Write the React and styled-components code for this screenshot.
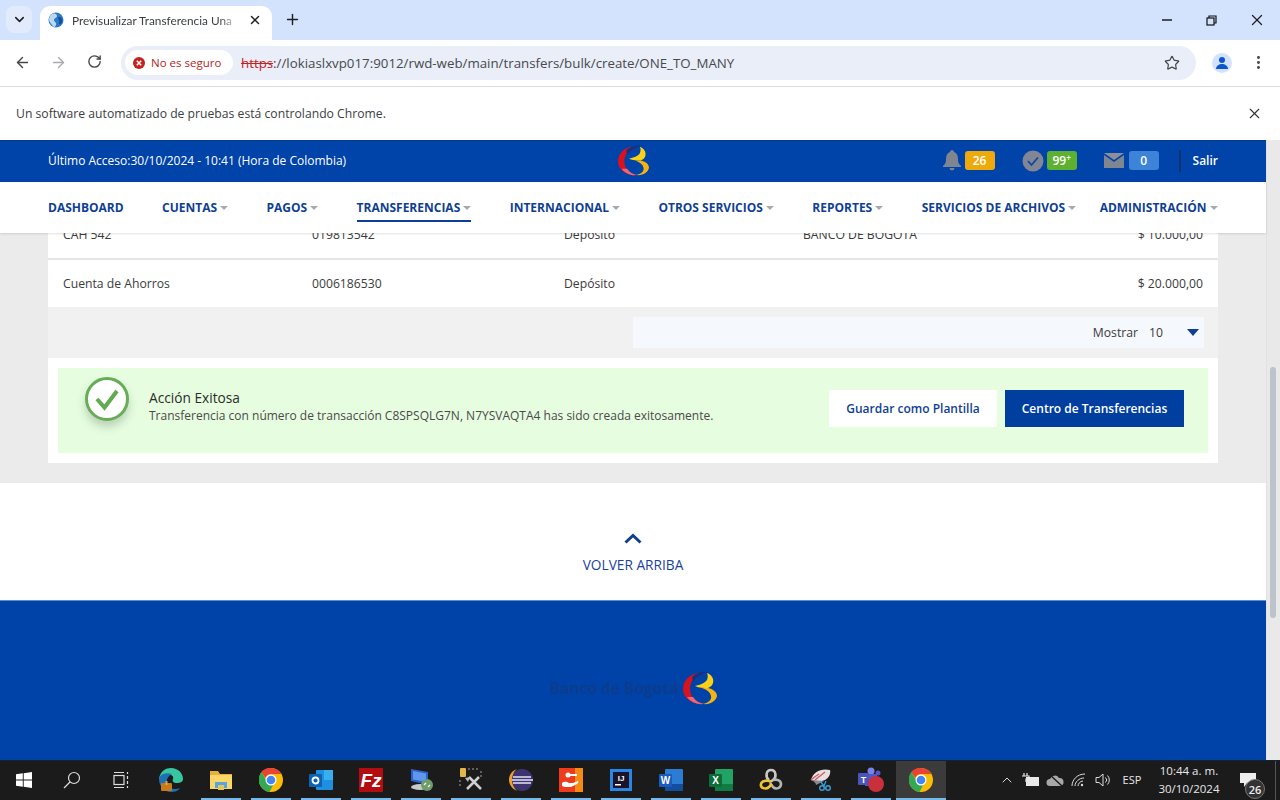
import React from 'react'
import styled, { createGlobalStyle } from 'styled-components'
import { ArrowLeft, ArrowRight, RotateCw, Star, X, Plus, ChevronDown, ChevronUp, EllipsisVertical } from 'lucide-react'

const Global = createGlobalStyle`
  html, body { margin: 0; padding: 0; height: 100%; overflow: hidden; background: #fff; }
  body { font-family: "Open Sans", "Noto Sans", sans-serif; }
  * { box-sizing: border-box; }
`

const Screen = styled.div`
  width: 1280px;
  height: 800px;
  display: flex;
  flex-direction: column;
  overflow: hidden;
`

/* browser chrome */
const TabStrip = styled.div`
  height: 40px;
  background: #d3e3fd;
  display: flex;
  align-items: flex-end;
  color: #1f1f1f;
`
const TabMenu = styled.div`
  width: 26px;
  height: 27px;
  margin: 0 8px 7px 6px;
  border-radius: 8px;
  background: #e1ebfc;
  display: flex;
  align-items: center;
  justify-content: center;
`
const Tab = styled.div`
  width: 232px;
  height: 34px;
  background: #fff;
  border-radius: 10px 10px 0 0;
  display: flex;
  align-items: center;
  padding: 0 9px 6px 8px;
  gap: 8px;
`
const TabTitle = styled.span`
  font-family: Lato, "Open Sans", sans-serif;
  font-size: 11.800px;
  width: 168px;
  white-space: nowrap;
  color: #3c4043;
  mask-image: linear-gradient(to right, #000 88%, rgba(0, 0, 0, 0.35) 96%);
`
const NewTab = styled.div`
  margin: 0 0 11px 10px;
  width: 20px;
  height: 20px;
  display: flex;
  align-items: center;
  justify-content: center;
`
const WindowButtons = styled.div`
  margin-left: auto;
  display: flex;
  align-self: stretch;
  align-items: center;
`
const WindowButton = styled.div`
  width: 46px;
  height: 40px;
  display: flex;
  align-items: center;
  justify-content: center;
`
const Toolbar = styled.div`
  height: 47px;
  background: #fff;
  border-bottom: 1px solid #dcdcdc;
  border-radius: 0 8px 0 0;
  display: flex;
  align-items: center;
  padding: 0 0 1px 0;
`
const ToolButton = styled.div`
  width: 36px;
  display: flex;
  justify-content: center;
  color: ${p => p.$off ? '#a9acb0' : '#444746'};
`
const NavButtons = styled.div`
  width: 121px;
  display: flex;
  padding-left: 4px;
`
const AddressBar = styled.div`
  width: 1075px;
  height: 34px;
  border-radius: 17px;
  background: #e9eef8;
  display: flex;
  align-items: center;
  padding: 0 4px;
`
const SecurityChip = styled.div`
  width: 108px;
  height: 25px;
  border-radius: 13px;
  background: #fff;
  display: flex;
  align-items: center;
  gap: 6px;
  padding-left: 8px;
  font-size: 11.500px;
  color: #b3261e;
  white-space: nowrap;
`
const Url = styled.div`
  margin-left: 8px;
  font-size: 13.300px;
  color: #474a4d;
  white-space: nowrap;
  s { color: #c5221f; }
`
const StarSlot = styled.div`
  margin-left: auto;
  width: 40px;
  display: flex;
  justify-content: center;
  color: #444746;
`
const Avatar = styled.div`
  width: 20px;
  height: 20px;
  margin-left: 16px;
  border-radius: 50%;
  background: #d3e3fd;
  display: flex;
  align-items: center;
  justify-content: center;
`
const MenuDots = styled.div`
  margin-left: 16px;
  width: 20px;
  display: flex;
  justify-content: center;
`
const InfoBar = styled.div`
  height: 53px;
  background: #fff;
  display: flex;
  align-items: center;
  justify-content: space-between;
  padding: 0 17px 0 16px;
  font-size: 12.200px;
  color: #3c4043;
`

/* page */
const Viewport = styled.div`
  flex: 1;
  display: flex;
  min-height: 0;
`
const Page = styled.div`
  width: 1266px;
  display: flex;
  flex-direction: column;
`
const Scrollbar = styled.div`
  width: 14px;
  background: #e9e9e9;
  border-left: 1px solid #e2e2e2;
`
const Thumb = styled.div`
  width: 6px;
  height: 251px;
  margin: 227px 0 0 3px;
  border-radius: 3px;
  background: #bcc3cb;
`
const TopBar = styled.header`
  height: 42px;
  flex: none;
  background: #0043a9;
  border-top: 1px solid #0a3a8a;
  padding: 0 48px 2px;
  display: flex;
  align-items: center;
  color: #fff;
  font-size: 12px;
`
const LastAccess = styled.div`
  width: 570px;
  white-space: nowrap;
`
const Notices = styled.div`
  margin-left: auto;
  display: flex;
  align-items: center;
`
const Notice = styled.div`
  display: flex;
  align-items: center;
  gap: ${p => p.$gap}px;
  margin-right: ${p => p.$after}px;
`
const Badge = styled.span`
  width: 30px;
  height: 19px;
  border-radius: 3px;
  background: ${p => p.$color};
  color: #fff;
  font-size: 12px;
  font-weight: 600;
  display: flex;
  align-items: center;
  justify-content: center;
  sup { font-size: 8px; line-height: 0; margin-top: -5px; }
`
const Salir = styled.span`
  border-left: 2px solid #0a3070;
  height: 22px;
  padding-left: 12px;
  font-size: 12px;
  font-weight: 600;
  display: flex;
  align-items: center;
`
const MainNav = styled.nav`
  height: 51px;
  flex: none;
  background: #fff;
  display: flex;
  align-items: center;
  gap: 38.400px;
  padding: 0 0 0 48px;
  position: relative;
  z-index: 2;
  box-shadow: 0 1px 2px rgba(0, 0, 0, 0.12);
`
const NavItem = styled.div`
  height: 51px;
  display: flex;
  align-items: center;
  gap: 3px;
  font-size: 12px;
  font-weight: 700;
  color: #0f3f93;
  white-space: nowrap;
  padding-bottom: 1px;
  margin-left: ${p => p.$tight ? '-15px' : 0};
  position: relative;
  &::after {
    content: '';
    display: ${p => p.$active ? 'block' : 'none'};
    position: absolute;
    left: 0;
    right: 0;
    bottom: 11px;
    height: 2px;
    background: #0c3f95;
  }
`
const Caret = styled.span`
  width: 0;
  height: 0;
  margin-top: 2px;
  border-left: 4px solid transparent;
  border-right: 4px solid transparent;
  border-top: 4px solid #a4a9b2;
`
const Scroller = styled.div`
  height: 250px;
  flex: none;
  background: #ebebeb;
  overflow: hidden;
  padding: 0 48px;
`
const Card = styled.section`
  margin-top: -23px;
  background: #fff;
`
const Row = styled.div`
  height: ${p => p.$last ? 47 : 50}px;
  display: grid;
  grid-template-columns: 249px 252px 239px 1fr auto;
  align-items: center;
  padding: 0 15px;
  font-size: 12.200px;
  color: #3b3b3b;
  border-bottom: ${p => p.$last ? 'none' : '2px solid #e6e6e6'};
`
const PagerBand = styled.div`
  height: 51px;
  background: #f1f1f1;
  padding: 10px 14px 0 0;
  display: flex;
  justify-content: flex-end;
`
const Pager = styled.div`
  width: 571px;
  height: 31px;
  background: #f5f8fd;
  display: flex;
  align-items: center;
  justify-content: flex-end;
  font-size: 12.200px;
  color: #3b3b3b;
  padding-right: 5px;
`
const PagerValue = styled.span`
  margin: 0 29px 0 11px;
  width: 9px;
  white-space: nowrap;
`
const PagerCaret = styled.span`
  width: 0;
  height: 0;
  border-left: 6px solid transparent;
  border-right: 6px solid transparent;
  border-top: 7px solid #0f3f93;
`
const ResultPanel = styled.div`
  padding: 10px;
`
const Success = styled.div`
  height: 85px;
  background: #e6fde0;
  display: flex;
  align-items: center;
  padding: 0 24px 4px 27px;
`
const SuccessMark = styled.div`
  width: 44px;
  height: 44px;
  border-radius: 50%;
  background: #fff;
  border: 3px solid #67ac57;
  flex: none;
  margin-top: -20px;
  display: flex;
  align-items: center;
  justify-content: center;
  box-shadow: 0 6px 9px rgba(80, 100, 80, 0.28);
`
const SuccessText = styled.div`
  margin: 0 auto 0 20px;
  padding-bottom: 4px;
`
const SuccessTitle = styled.div`
  font-size: 13.700px;
  line-height: 18px;
  color: #2b2b2b;
`
const SuccessBody = styled.div`
  font-size: 12px;
  line-height: 17px;
  color: #4a4a4a;
  white-space: nowrap;
`
const ActionButton = styled.button`
  height: 37px;
  width: ${p => p.$w}px;
  margin-left: ${p => p.$gap || 0}px;
  border: 0;
  padding: 0;
  font: 600 12px "Open Sans", sans-serif;
  background: ${p => p.$primary ? '#003f9f' : '#fff'};
  color: ${p => p.$primary ? '#fff' : '#0f3f93'};
`
const BackToTop = styled.div`
  height: 118px;
  flex: none;
  background: #fff;
  border-bottom: 1px solid #5d8ad0;
  display: flex;
  flex-direction: column;
  align-items: center;
  gap: 12px;
  padding-top: 50px;
  color: #1a43a0;
  font-size: 13.700px;
  line-height: 18px;
`
const Footer = styled.footer`
  flex: 1;
  background: #0043a8;
  display: flex;
  align-items: center;
  justify-content: center;
  gap: 4px;
  padding-top: 15px;
`
const FooterBrand = styled.span`
  font-size: 15.500px;
  font-weight: 700;
  color: #0c3c8e;
  white-space: nowrap;
`

/* taskbar */
const Taskbar = styled.div`
  height: 40px;
  flex: none;
  background: #1b1b1b;
  border-top: 1px solid #16203a;
  display: flex;
  align-items: stretch;
  color: #e8e8e8;
`
const TaskCell = styled.div`
  width: ${p => p.$w || 50}px;
  margin-left: ${p => p.$ml || 0}px;
  padding-bottom: 2px;
  display: flex;
  align-items: center;
  justify-content: center;
  background: ${p => p.$active ? '#3b3b3b' : 'transparent'};
  position: relative;
  &::after {
    content: '';
    display: ${p => p.$open ? 'block' : 'none'};
    position: absolute;
    left: ${p => p.$active ? 0 : 5}px;
    right: ${p => p.$active ? 0 : 5}px;
    bottom: 0;
    height: 2px;
    background: #76b9ed;
  }
`
const Clock = styled.div`
  width: 78px;
  text-align: center;
  font-size: 11.500px;
  line-height: 18px;
  padding-top: 1px;
  white-space: nowrap;
`
const LangLabel = styled.span`
  font-size: 11px;
`
const NotifyCount = styled.span`
  position: absolute;
  right: 3px;
  bottom: 1px;
  width: 20px;
  height: 20px;
  border-radius: 50%;
  background: #333;
  border: 1px solid #777;
  color: #eee;
  font-size: 11px;
  font-weight: 600;
  display: flex;
  align-items: center;
  justify-content: center;
`
const DesktopEdge = styled.div`
  flex: 1;
  margin-left: 7px;
  border-left: 1px solid #555;
`

const BrandLogo = ({ size }) => (
  <svg width={size} height={size} viewBox="0 0 34 34">
    <path d="M16 2C6 3 0 10 0 18c0 9 9 16 21 15-8-2-14-7-14-15 0-6 3-11 9-16z" fill="#d8121f" />
    <path d="M4 26c3 4 9 8 17 7-5-1-8-3-11-7z" fill="#e66a7a" />
    <path d="M9 6c4-4 10-6 17-5-6 1-12 4-16 10z" fill="#1d2f7a" />
    <path d="M24 2c5 2 7 6 6 10-1 3-3 4-5 5-4 0-9 0-13-2 5-1 10-3 12-6 1-2 1-5 0-7z" fill="#fcd116" />
    <path d="M25 17c5 1 9 4 9 8-1 5-7 9-14 8 5-1 9-4 8-8-1-4-4-6-9-8z" fill="#f4b412" />
  </svg>
)

const Globe = () => (
  <svg width="16" height="16" viewBox="0 0 16 16">
    <circle cx="8" cy="8" r="7.500" fill="#2b79c9" />
    <path d="M4 2c3-1 5 0 5 2S6 6 6 8s3 2 2 5-3 2-4 0-3-3-3-5 1-5 3-6z" fill="#bcd9ef" />
    <path d="M11 5c2 0 4 2 3 5s-3 3-3 1 1-2 0-3-1-3 0-3z" fill="#134f96" />
  </svg>
)

const Bell = () => (
  <svg width="18" height="21" viewBox="0 0 18 21" fill="#7f8690">
    <path d="M9 0c1 0 2 1 2 2 3 1 4 4 4 7 0 4 1 5 3 7v1H0v-1c2-2 3-3 3-7 0-3 1-6 4-7 0-1 1-2 2-2z" />
    <path d="M6.500 18h5a2.500 2.500 0 0 1-5 0z" />
  </svg>
)
const CheckBadge = () => (
  <svg width="22" height="22" viewBox="0 0 22 22">
    <circle cx="11" cy="11" r="10.500" fill="#808694" />
    <path d="M6 11l3.500 4L16 7.500" fill="none" stroke="#0d46a0" strokeWidth="1.800" />
  </svg>
)
const Mail = () => (
  <svg width="20" height="15" viewBox="0 0 20 15">
    <path d="M0 0h20L10 7z" fill="#8a8f9a" />
    <path d="M0 2l10 7 10-7v13H0z" fill="#7f8690" />
  </svg>
)
const GreenCheck = () => (
  <svg width="28" height="24" viewBox="0 0 28 24">
    <path d="M4 12l7.500 8.500L24 4" fill="none" stroke="#62a951" strokeWidth="4" />
  </svg>
)
const ChromeLogo = () => (
  <svg width="24" height="24" viewBox="0 0 24 24">
    <circle cx="12" cy="12" r="12" fill="#fbbc04" />
    <path d="M12 0a12 12 0 0 1 10.400 6H12a6 6 0 0 0-5.700 4.100L2.300 4A12 12 0 0 1 12 0z" fill="#ea4335" />
    <path d="M1.600 18A12 12 0 0 1 2.300 4l5 8.500a5 5 0 0 0 7 4L10.500 24A12 12 0 0 1 1.600 18z" fill="#34a853" />
    <circle cx="12" cy="12" r="5.500" fill="#fff" />
    <circle cx="12" cy="12" r="4.300" fill="#4285f4" />
  </svg>
)
const WinLogo = () => (
  <svg width="16" height="16" viewBox="0 0 16 16" fill="#fff">
    <path d="M0 2.300 6.800 1.300v6.300H0zM7.700 1.200 16 0v7.600H7.700zM0 8.400h6.800v6.300L0 13.700zM7.700 8.400H16V16l-8.300-1.200z" />
  </svg>
)
const SearchGlyph = () => (
  <svg width="18" height="18" viewBox="0 0 18 18" fill="none" stroke="#ddd" strokeWidth="1.200">
    <circle cx="11" cy="7" r="5.500" />
    <path d="M7 11l-6 6" />
  </svg>
)
const TaskView = () => (
  <svg width="18" height="18" viewBox="0 0 18 18" fill="none" stroke="#ddd" strokeWidth="1.200">
    <rect x="2" y="4.500" width="10" height="9" />
    <path d="M2 1.500h10M2 16.500h10M15.500 1v2M15.500 5v3M15.500 10v3M15.500 15v2" />
  </svg>
)
const EdgeLogo = () => (
  <svg width="26" height="26" viewBox="0 0 26 26">
    <path d="M1 12C2 4 8 1 13 1c7 0 12 5 12 11 0 3-3 4-6 4-4 0-5-2-4-4 1-3-2-5-5-4-4 1-6 4-6 7z" fill="#37c6a0" />
    <path d="M1 12c0 7 5 13 12 13 4 0 7-1 9-4-5 2-11 1-13-4-1-4 1-8 5-10C8 5 2 7 1 12z" fill="#1b70b6" />
    <rect x="3" y="16" width="11" height="8" rx="1" fill="#c77a1a" />
    <rect x="7.500" y="14" width="2" height="4" fill="#e9a23b" />
  </svg>
)
const FolderLogo = () => (
  <svg width="24" height="22" viewBox="0 0 24 22">
    <path d="M1 2h8l2 3h12v15H1z" fill="#e8b23a" />
    <rect x="1" y="6" width="22" height="14" fill="#fbd669" />
    <rect x="6" y="13" width="12" height="6" fill="#56a6e0" />
    <rect x="9" y="16" width="6" height="5" fill="#e8c55a" />
  </svg>
)
const OutlookLogo = () => (
  <svg width="24" height="22" viewBox="0 0 24 22">
    <rect x="7" y="1" width="17" height="20" rx="1" fill="#1f8fe0" />
    <rect x="15" y="1" width="9" height="10" fill="#38b0f0" />
    <rect x="0" y="5" width="13" height="13" rx="1" fill="#0b63b5" />
    <circle cx="6.500" cy="11.500" r="3" fill="none" stroke="#fff" strokeWidth="1.800" />
  </svg>
)
const FileZilla = () => (
  <svg width="24" height="24" viewBox="0 0 24 24">
    <rect width="24" height="24" fill="#b30d12" />
    <text x="12" y="19" textAnchor="middle" fontSize="19" fontWeight="700" fontStyle="italic" fill="#fff" fontFamily="Liberation Sans, sans-serif">Fz</text>
  </svg>
)
const RemoteDesktop = () => (
  <svg width="24" height="24" viewBox="0 0 24 24">
    <path d="M2 1l17 3v13L2 13z" fill="#2f62c8" />
    <path d="M4 3l13 2.500V14L4 11.500z" fill="#5f96ee" />
    <ellipse cx="11" cy="19" rx="9" ry="3" fill="#c9c9c9" />
    <circle cx="18" cy="17" r="6" fill="#6f9d6a" />
    <path d="M15 17l2-2M21 17l-2 2" stroke="#fff" strokeWidth="1.200" />
  </svg>
)
const Tools = () => (
  <svg width="24" height="24" viewBox="0 0 24 24">
    <rect x="1" y="0" width="6" height="9" rx="1" fill="#e2b64a" />
    <path d="M9 1h11M22 3v6M1 12v8" stroke="#777" strokeWidth="1.500" strokeDasharray="2 2" />
    <path d="M8 21L20 9M10 9l12 12" stroke="#cfcfcf" strokeWidth="2.500" />
    <path d="M6 10l5-1-2 5z" fill="#bbb" />
  </svg>
)
const Eclipse = () => (
  <svg width="26" height="24" viewBox="0 0 26 24">
    <circle cx="14" cy="12" r="11" fill="#3c3470" />
    <path d="M5 9h18M3 12h22M5 15h18" stroke="#e6e4f2" strokeWidth="1.600" />
    <path d="M9 1C3 3 1 8 1 12s3 9 8 11C5 19 4 15 4 12s1-8 5-11z" fill="#f0a030" />
  </svg>
)
const OrangeHand = () => (
  <svg width="24" height="24" viewBox="0 0 24 24">
    <rect width="24" height="24" fill="#ee3b1b" />
    <rect x="16" width="8" height="24" fill="#f58a14" />
    <path d="M3 15c3-2 5-1 7 0h4l5-2c1 1 0 2-1 3l-6 3H6l-3-1z" fill="#fff" />
    <circle cx="9" cy="7" r="2.500" fill="#fff" />
    <rect x="10" y="6" width="8" height="2" fill="#fff" />
  </svg>
)
const IntelliJ = () => (
  <svg width="22" height="22" viewBox="0 0 22 22">
    <rect width="22" height="22" fill="#2a86e6" />
    <rect x="3" y="3" width="16" height="16" fill="#1b1428" />
    <text x="11" y="12" textAnchor="middle" fontSize="8" fontWeight="700" fill="#fff" fontFamily="Liberation Sans, sans-serif">IJ</text>
    <rect x="5" y="15" width="6" height="1.500" fill="#fff" />
  </svg>
)
const Word = () => (
  <svg width="24" height="22" viewBox="0 0 24 22">
    <rect x="6" y="0" width="18" height="22" rx="1" fill="#2b7cd3" />
    <rect x="6" y="15" width="18" height="7" fill="#114f9e" />
    <rect x="0" y="5" width="13" height="13" rx="1" fill="#185abd" />
    <text x="6.500" y="15" textAnchor="middle" fontSize="10" fontWeight="700" fill="#fff" fontFamily="Liberation Sans, sans-serif">W</text>
  </svg>
)
const Excel = () => (
  <svg width="24" height="22" viewBox="0 0 24 22">
    <rect x="6" y="0" width="18" height="22" rx="1" fill="#21a366" />
    <rect x="6" y="15" width="18" height="7" fill="#107c41" />
    <rect x="0" y="5" width="13" height="13" rx="1" fill="#0e6b3a" />
    <text x="6.500" y="15" textAnchor="middle" fontSize="10" fontWeight="700" fill="#fff" fontFamily="Liberation Sans, sans-serif">X</text>
  </svg>
)
const Knot = () => (
  <svg width="24" height="24" viewBox="0 0 24 24" fill="none" strokeWidth="2.600">
    <path d="M10 12C6 9 7 2 12 2s6 7 2 10l-3 2" stroke="#c7c7c7" />
    <path d="M14 12c3-1 8 0 8 4s-5 6-8 3l-3-4" stroke="#b5b5b5" />
    <path d="M12 14c-2-2-9-2-10 2s5 6 8 3l3-3" stroke="#f0c330" />
  </svg>
)
const Snip = () => (
  <svg width="24" height="24" viewBox="0 0 24 24">
    <path d="M2 12C4 4 12 0 21 2c1 3-1 8-5 10-5 2-10 1-14 0z" fill="#e8e0e0" />
    <path d="M2 12c2-2 5-4 8-6M6 12l10-8" stroke="#d0606a" strokeWidth="1.500" />
    <path d="M2 12c3 1 5 3 5 5l8-4z" fill="#8a8a8a" />
    <path d="M11 13l4 5M17 13l-2 5" stroke="#3aa0d8" strokeWidth="1.300" />
    <circle cx="13" cy="20" r="2.300" fill="none" stroke="#3aa0d8" strokeWidth="1.400" />
    <circle cx="19" cy="20" r="2.300" fill="none" stroke="#3aa0d8" strokeWidth="1.400" />
  </svg>
)
const Teams = () => (
  <svg width="28" height="26" viewBox="0 0 28 26">
    <circle cx="14" cy="4" r="3.500" fill="#7b83eb" />
    <circle cx="21" cy="6" r="2.500" fill="#5059c9" />
    <rect x="8" y="7" width="12" height="12" fill="#5059c9" />
    <rect x="1" y="6" width="11" height="12" rx="1" fill="#4b53bc" />
    <text x="6.500" y="15.500" textAnchor="middle" fontSize="9" fontWeight="700" fill="#fff" fontFamily="Liberation Sans, sans-serif">T</text>
    <circle cx="19" cy="17" r="8" fill="#c8303c" />
  </svg>
)
const Tray = {
  Plug: () => (
    <svg width="18" height="14" viewBox="0 0 18 14">
      <rect x="4" y="4" width="13" height="9" fill="#e8e8e8" />
      <path d="M2 0v3M5 0v3M0 3h7v3H4v3" stroke="#e8e8e8" strokeWidth="1.200" fill="none" />
    </svg>
  ),
  Cloud: () => (
    <svg width="18" height="14" viewBox="0 0 18 14">
      <path d="M4 13a3.500 3.500 0 0 1 0-7 5 5 0 0 1 9-1 4 4 0 0 1 1 8z" fill="#a8a8a8" />
      <path d="M3 1l13 12" stroke="#1b1b1b" strokeWidth="1.400" />
    </svg>
  ),
  Wifi: () => (
    <svg width="16" height="14" viewBox="0 0 16 14" fill="none" stroke="#ddd" strokeWidth="1">
      <path d="M1 13C1 7 6 1 14 1M4 13c0-4 4-8 9-8M7 13c0-2 2-5 5-5" />
      <circle cx="11" cy="12" r="1.200" fill="#ddd" stroke="none" />
    </svg>
  ),
  Speaker: () => (
    <svg width="16" height="14" viewBox="0 0 16 14" fill="none" stroke="#ddd" strokeWidth="1">
      <path d="M1 4.500h3L8 1v12L4 9.500H1zM10.500 4.500a3.500 3.500 0 0 1 0 5M12.500 2.500a6.500 6.500 0 0 1 0 9" />
    </svg>
  ),
  Note: () => (
    <svg width="16" height="14" viewBox="0 0 16 14">
      <path d="M0 0h16v10H7l-3 4v-4H0z" fill="#eee" />
    </svg>
  ),
}

const navItems = [
  { label: 'DASHBOARD', plain: true },
  { label: 'CUENTAS' },
  { label: 'PAGOS' },
  { label: 'TRANSFERENCIAS', active: true },
  { label: 'INTERNACIONAL' },
  { label: 'OTROS SERVICIOS' },
  { label: 'REPORTES' },
  { label: 'SERVICIOS DE ARCHIVOS' },
  { label: 'ADMINISTRACIÓN', tight: true },
]

const taskApps = [EdgeLogo, FolderLogo, ChromeLogo, OutlookLogo, FileZilla, RemoteDesktop, Tools, Eclipse, OrangeHand, IntelliJ, Word, Excel, Knot, Snip, Teams]

export default function App() {
  return (
    <Screen>
      <Global />
      <TabStrip>
        <TabMenu><ChevronDown size={15} strokeWidth={2.5} /></TabMenu>
        <Tab>
          <Globe />
          <TabTitle>Previsualizar Transferencia Una</TabTitle>
          <X size={14} strokeWidth={2.5} />
        </Tab>
        <NewTab><Plus size={17} strokeWidth={2} /></NewTab>
        <WindowButtons>
          <WindowButton>
            <svg width="14" height="14" viewBox="0 0 14 14" stroke="#111" strokeWidth="1.400">
              <path d="M4 7h10" />
            </svg>
          </WindowButton>
          <WindowButton>
            <svg width="11" height="11" viewBox="0 0 11 11" fill="none" stroke="#111" strokeWidth="1.200">
              <rect x="1" y="3" width="7" height="7" />
              <path d="M3 3V1h7v7H8" />
            </svg>
          </WindowButton>
          <WindowButton><X size={18} strokeWidth={1.7} /></WindowButton>
        </WindowButtons>
      </TabStrip>

      <Toolbar>
        <NavButtons>
          <ToolButton><ArrowLeft size={17} strokeWidth={2} /></ToolButton>
          <ToolButton $off><ArrowRight size={17} strokeWidth={2} /></ToolButton>
          <ToolButton><RotateCw size={15} strokeWidth={2.2} /></ToolButton>
        </NavButtons>
        <AddressBar>
          <SecurityChip>
            <svg width="12" height="12" viewBox="0 0 12 12">
              <circle cx="6" cy="6" r="6" fill="#c5221f" />
              <path d="M3.800 3.800l4.400 4.400M8.200 3.800l-4.400 4.400" stroke="#fff" strokeWidth="1.500" />
            </svg>
            No es seguro
          </SecurityChip>
          <Url><s>https</s>://lokiaslxvp017:9012/rwd-web/main/transfers/bulk/create/ONE_TO_MANY</Url>
          <StarSlot><Star size={16} strokeWidth={1.8} /></StarSlot>
        </AddressBar>
        <Avatar>
          <svg width="14" height="14" viewBox="0 0 14 14" fill="#0b57d0">
            <circle cx="7" cy="4" r="3" />
            <path d="M1 13c0-3 3-5 6-5s6 2 6 5z" />
          </svg>
        </Avatar>
        <MenuDots><EllipsisVertical size={17} strokeWidth={2.2} color="#444746" /></MenuDots>
      </Toolbar>

      <InfoBar>
        Un software automatizado de pruebas está controlando Chrome.
        <X size={17} strokeWidth={1.6} color="#333" />
      </InfoBar>

      <Viewport>
        <Page>
          <TopBar>
            <LastAccess>Último Acceso:30/10/2024 - 10:41 (Hora de Colombia)</LastAccess>
            <BrandLogo size={31} />
            <Notices>
              <Notice $gap={4} $after={27}><Bell /><Badge $color="#eeaa0a">26</Badge></Notice>
              <Notice $gap={3} $after={27}><CheckBadge /><Badge $color="#5eb130">99<sup>+</sup></Badge></Notice>
              <Notice $gap={5} $after={20}><Mail /><Badge $color="#3d84d8">0</Badge></Notice>
              <Salir>Salir</Salir>
            </Notices>
          </TopBar>
          <MainNav>
            {navItems.map(item => (
              <NavItem key={item.label} $active={item.active} $tight={item.tight}>
                {item.label}
                {!item.plain && <Caret />}
              </NavItem>
            ))}
          </MainNav>
          <Scroller>
            <Card>
              <Row>
                <span>CAH 542</span>
                <span>019813542</span>
                <span>Depósito</span>
                <span>BANCO DE BOGOTA</span>
                <span>$ 10.000,00</span>
              </Row>
              <Row $last>
                <span>Cuenta de Ahorros</span>
                <span>0006186530</span>
                <span>Depósito</span>
                <span />
                <span>$ 20.000,00</span>
              </Row>
              <PagerBand>
                <Pager>
                  Mostrar
                  <PagerValue>10</PagerValue>
                  <PagerCaret />
                </Pager>
              </PagerBand>
              <ResultPanel>
                <Success>
                  <SuccessMark><GreenCheck /></SuccessMark>
                  <SuccessText>
                    <SuccessTitle>Acción Exitosa</SuccessTitle>
                    <SuccessBody>Transferencia con número de transacción C8SPSQLG7N, N7YSVAQTA4 has sido creada exitosamente.</SuccessBody>
                  </SuccessText>
                  <ActionButton $w={168}>Guardar como Plantilla</ActionButton>
                  <ActionButton $w={179} $gap={8} $primary>Centro de Transferencias</ActionButton>
                </Success>
              </ResultPanel>
            </Card>
          </Scroller>
          <BackToTop>
            <svg width="18" height="11" viewBox="0 0 18 11" fill="none" stroke="#0f3f93" strokeWidth="3">
              <path d="M1.500 9.500L9 2.500l7.500 7" />
            </svg>
            VOLVER ARRIBA
          </BackToTop>
          <Footer>
            <FooterBrand>Banco de Bogotá</FooterBrand>
            <BrandLogo size={34} />
          </Footer>
        </Page>
        <Scrollbar><Thumb /></Scrollbar>
      </Viewport>

      <Taskbar>
        <TaskCell $w={48}><WinLogo /></TaskCell>
        <TaskCell $w={48}><SearchGlyph /></TaskCell>
        <TaskCell $w={50}><TaskView /></TaskCell>
        {taskApps.map((Icon, i) => (
          <TaskCell key={i} $open={i > 0}><Icon /></TaskCell>
        ))}
        <TaskCell $active $open><ChromeLogo /></TaskCell>
        <TaskCell $w={24} $ml={49}><ChevronUp size={16} strokeWidth={1.4} /></TaskCell>
        <TaskCell $w={24}><Tray.Plug /></TaskCell>
        <TaskCell $w={24}><Tray.Cloud /></TaskCell>
        <TaskCell $w={24}><Tray.Wifi /></TaskCell>
        <TaskCell $w={23}><Tray.Speaker /></TaskCell>
        <TaskCell $w={36}><LangLabel>ESP</LangLabel></TaskCell>
        <Clock>10:44 a. m.<br />30/10/2024</Clock>
        <TaskCell $w={40}>
          <Tray.Note />
          <NotifyCount>26</NotifyCount>
        </TaskCell>
        <DesktopEdge />
      </Taskbar>
    </Screen>
  )
}
